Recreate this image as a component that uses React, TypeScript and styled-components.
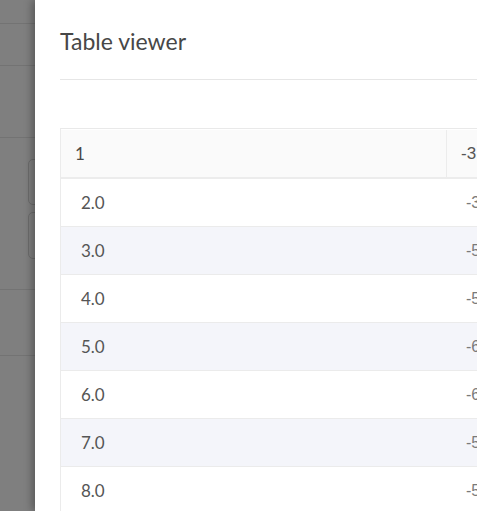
import styled, { createGlobalStyle } from 'styled-components';

const GlobalStyle = createGlobalStyle`
  * {
    box-sizing: border-box;
  }
  html, body {
    margin: 0;
    padding: 0;
    width: 477px;
    height: 511px;
    overflow: hidden;
    background: #7f7f7f;
  }
  body {
    font-family: Lato, 'Open Sans', sans-serif;
  }
`;

const Screen = styled.div`
  display: flex;
  flex-direction: row;
  width: 477px;
  height: 511px;
  overflow: hidden;
`;

const Backdrop = styled.div`
  flex: none;
  width: 35px;
  display: flex;
  flex-direction: column;
  background: #7f7f7f;
`;

const BackdropSection = styled.div<{ $height: number; $padded?: boolean }>`
  height: ${(p) => p.$height}px;
  border-bottom: 1px solid #737373;
  display: flex;
  flex-direction: column;
  gap: 7px;
  padding-top: ${(p) => (p.$padded ? 21 : 0)}px;
`;

const BackdropBox = styled.div<{ $height: number }>`
  margin-left: 28px;
  width: 30px;
  height: ${(p) => p.$height}px;
  border: 1px solid #6c6c6c;
  border-radius: 5px;
`;

const Drawer = styled.div`
  flex: none;
  width: 640px;
  height: 511px;
  background: #fff;
  box-shadow: -3px 0 8px rgba(0, 0, 0, 0.3);
  position: relative;
`;

const DrawerHeader = styled.div`
  margin: 0 25px;
  padding: 26px 0 23px;
  border-bottom: 1px solid #e6e6e6;
`;

const Title = styled.h2`
  margin: 0;
  font-size: 23px;
  line-height: 30px;
  font-weight: 400;
  color: #474747;
`;

const DrawerBody = styled.div`
  padding: 48px 25px 0;
`;

const TableFrame = styled.div`
  border-top: 1px solid #e9e9e9;
  border-left: 1px solid #ebebeb;
  padding-top: 1px;
`;

const Row = styled.div<{ $striped?: boolean }>`
  display: grid;
  grid-template-columns: 385px 200px;
  height: 48px;
  border-bottom: 1px solid #ebebeb;
  background: ${(p) => (p.$striped ? '#f4f5fa' : '#fff')};
`;

const HeadRow = styled(Row)`
  height: 49px;
  background: #fafafa;
  border-bottom: 2px solid #ececec;
`;

const HeadCell = styled.div`
  display: flex;
  align-items: center;
  padding: 0 14px;
  font-size: 17px;
  color: #484848;
  & + & {
    border-left: 1px solid #ececec;
    font-family: 'Liberation Sans', Arial, sans-serif;
    color: #555;
  }
`;

const Cell = styled.div`
  display: flex;
  align-items: center;
  padding: 0 20px;
  font-size: 17px;
  color: #555;
`;

const ValueCell = styled(Cell)`
  font-family: 'Liberation Sans', Arial, sans-serif;
  font-size: 16px;
  color: #7a7a7a;
`;

const rows = [
  ['2.0', '-3.418'],
  ['3.0', '-5.207'],
  ['4.0', '-5.562'],
  ['5.0', '-6.104'],
  ['6.0', '-6.331'],
  ['7.0', '-5.879'],
  ['8.0', '-5.443'],
];

function App() {
  return (
    <>
      <GlobalStyle />
      <Screen>
        <Backdrop>
          <BackdropSection $height={24} />
          <BackdropSection $height={42} />
          <BackdropSection $height={72} />
          <BackdropSection $height={152} $padded>
            <BackdropBox $height={46} />
            <BackdropBox $height={47} />
          </BackdropSection>
          <BackdropSection $height={66} />
        </Backdrop>
        <Drawer>
          <DrawerHeader>
            <Title>Table viewer</Title>
          </DrawerHeader>
          <DrawerBody>
            <TableFrame>
              <HeadRow>
                <HeadCell>1</HeadCell>
                <HeadCell>-3.296</HeadCell>
              </HeadRow>
              {rows.map(([a, b], i) => (
                <Row key={a} $striped={i % 2 === 1}>
                  <Cell>{a}</Cell>
                  <ValueCell>{b}</ValueCell>
                </Row>
              ))}
            </TableFrame>
          </DrawerBody>
        </Drawer>
      </Screen>
    </>
  );
}

export default App;
